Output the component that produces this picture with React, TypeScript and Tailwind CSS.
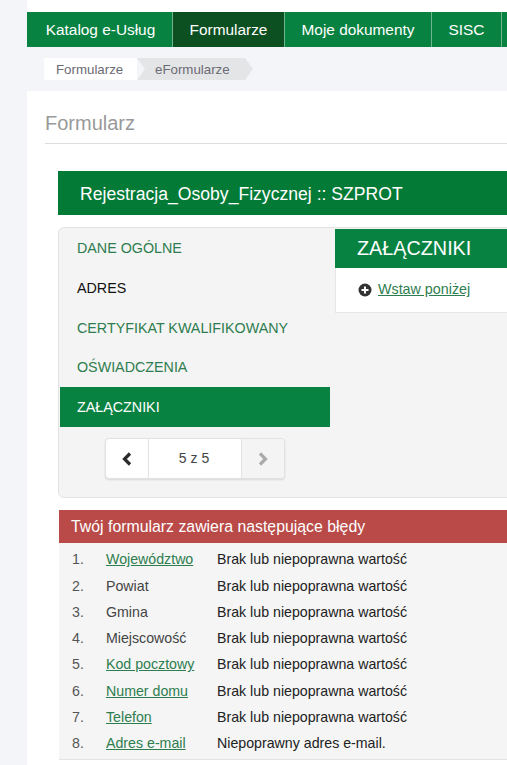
import React from 'react';

const navItems = [
  { label: 'Katalog e-Usług', width: 'w-[146px] pl-[2px]' },
  { label: 'Formularze', width: 'w-[112px]', active: true },
  { label: 'Moje dokumenty', width: 'w-[147px]' },
  { label: 'SISC', width: 'w-[70px]' },
];

const steps = [
  { label: 'DANE OGÓLNE', color: 'text-[#2e7d4f]' },
  { label: 'ADRES', color: 'text-[#111111]' },
  { label: 'CERTYFIKAT KWALIFIKOWANY', color: 'text-[#2e7d4f]' },
  { label: 'OŚWIADCZENIA', color: 'text-[#2e7d4f]' },
];

const missing = 'Brak lub niepoprawna wartość';

const errors = [
  { field: 'Województwo', link: true, message: missing },
  { field: 'Powiat', link: false, message: missing },
  { field: 'Gmina', link: false, message: missing },
  { field: 'Miejscowość', link: false, message: missing },
  { field: 'Kod pocztowy', link: true, message: missing },
  { field: 'Numer domu', link: true, message: missing },
  { field: 'Telefon', link: true, message: missing },
  { field: 'Adres e-mail', link: true, message: 'Niepoprawny adres e-mail.' },
];

export default function App() {
  return (
    <div className="w-[507px] h-[765px] overflow-hidden bg-[#f3f5f9] pl-[27px] font-['Liberation_Sans',Arial,sans-serif]">
      <div className="w-[520px]">
        <div className="h-[12px] bg-white" />

        {/* Top navigation */}
        <nav className="flex h-[35px] bg-[#088241] text-white text-[15.4px]">
          {navItems.map((item) => (
            <div
              key={item.label}
              className={`${item.width} flex items-center justify-center border-r border-[#6fb48f] ${item.active ? 'bg-[#0c4f20]' : ''}`}
            >
              {item.label}
            </div>
          ))}
        </nav>

        {/* Breadcrumb */}
        <div className="flex h-[22px] mt-[11px] ml-[17px] text-[13.3px] leading-[23px] text-[#6b6b75]">
          <div className="w-[93px] bg-white pl-[12px]">Formularze</div>
          <div className="relative w-[116px] bg-[#e4e5e7] pl-[18px] [clip-path:polygon(0_0,calc(100%-8px)_0,100%_50%,calc(100%-8px)_100%,0_100%,8px_50%)]">
            eFormularze
          </div>
        </div>

        {/* Content */}
        <main className="mt-[11px] bg-white pl-[18px] h-[680px]">
          <h1 className="pt-[20px] h-[53px] border-b border-[#dddddd] text-[20px] leading-[24px] text-[#999999]">
            Formularz
          </h1>

          <div className="ml-[13px] mt-[27px]">
            <div className="h-[44px] bg-[#047a37] pl-[22px] text-[17.6px] leading-[46px] text-white">
              Rejestracja_Osoby_Fizycznej :: SZPROT
            </div>

            <div className="flex h-[271px] mt-[12px] bg-[#f4f4f4] border border-[#e3e3e3] rounded-l-[6px] pl-[1px]">
              <div className="w-[270px] shrink-0">
                <ul className="text-[14.3px]">
                  {steps.map((step) => (
                    <li key={step.label} className={`h-[39.75px] pl-[17px] pt-[2px] flex items-center ${step.color}`}>
                      {step.label}
                    </li>
                  ))}
                  <li className="h-[40px] pl-[17px] pt-[2px] flex items-center bg-[#088241] text-white">ZAŁĄCZNIKI</li>
                </ul>

                {/* Pager */}
                <div className="flex h-[41px] w-[180px] mt-[11px] ml-[45px] bg-white border border-[#e2e2e2] rounded-[4px] shadow-[0_1px_2px_rgba(0,0,0,0.12)]">
                  <div className="w-[43px] flex items-center justify-center border-r border-[#e2e2e2]">
                    <svg width="12" height="14" viewBox="0 0 12 14">
                      <path d="M9 1.500 3.500 7 9 12.500" fill="none" stroke="#2b2b2b" strokeWidth="3.200" />
                    </svg>
                  </div>
                  <div className="flex-1 flex items-center justify-center text-[14px] text-[#444444] pr-[2px]">5 z 5</div>
                  <div className="w-[43px] flex items-center justify-center border-l border-[#e2e2e2] bg-[#f4f4f4] rounded-r-[4px]">
                    <svg width="12" height="14" viewBox="0 0 12 14">
                      <path d="M3 1.500 8.500 7 3 12.500" fill="none" stroke="#aaaaaa" strokeWidth="3.200" />
                    </svg>
                  </div>
                </div>
              </div>

              <div className="ml-[5px] mt-[1px] flex-1">
                <div className="h-[39px] bg-[#088241] pl-[22px] text-[19.8px] leading-[39px] text-white">ZAŁĄCZNIKI</div>
                <div className="h-[45px] bg-white border-b border-l border-[#e6e6e6] pl-[22px] flex items-center gap-[6px] text-[14.3px]">
                  <svg width="14" height="14" viewBox="0 0 14 14">
                    <circle cx="7" cy="7" r="6.500" fill="#333333" />
                    <path d="M7 3.500v7M3.500 7h7" stroke="#ffffff" strokeWidth="2" />
                  </svg>
                  <a className="text-[#2e7d4f] underline">Wstaw poniżej</a>
                </div>
              </div>
            </div>

            {/* Error list */}
            <div className="mt-[12px] ml-[1px]">
              <div className="h-[33px] bg-[#b94a48] pl-[12px] text-[15.85px] leading-[33px] text-white">
                Twój formularz zawiera następujące błędy
              </div>
              <ol className="bg-[#f5f5f5] border-b border-[#e3e3e3] pt-[3.8px] pb-[1.800px] text-[14.2px]">
                {errors.map((error, index) => (
                  <li key={error.field} className="flex h-[26.3px] items-center">
                    <span className="w-[47px] pl-[13px] text-[#555555]">{index + 1}.</span>
                    <span className="w-[111px]">
                      {error.link ? (
                        <a className="text-[#2e7d4f] underline">{error.field}</a>
                      ) : (
                        <span className="text-[#444444]">{error.field}</span>
                      )}
                    </span>
                    <span className="text-[#222222]">{error.message}</span>
                  </li>
                ))}
              </ol>
            </div>
          </div>
        </main>
      </div>
    </div>
  );
}
